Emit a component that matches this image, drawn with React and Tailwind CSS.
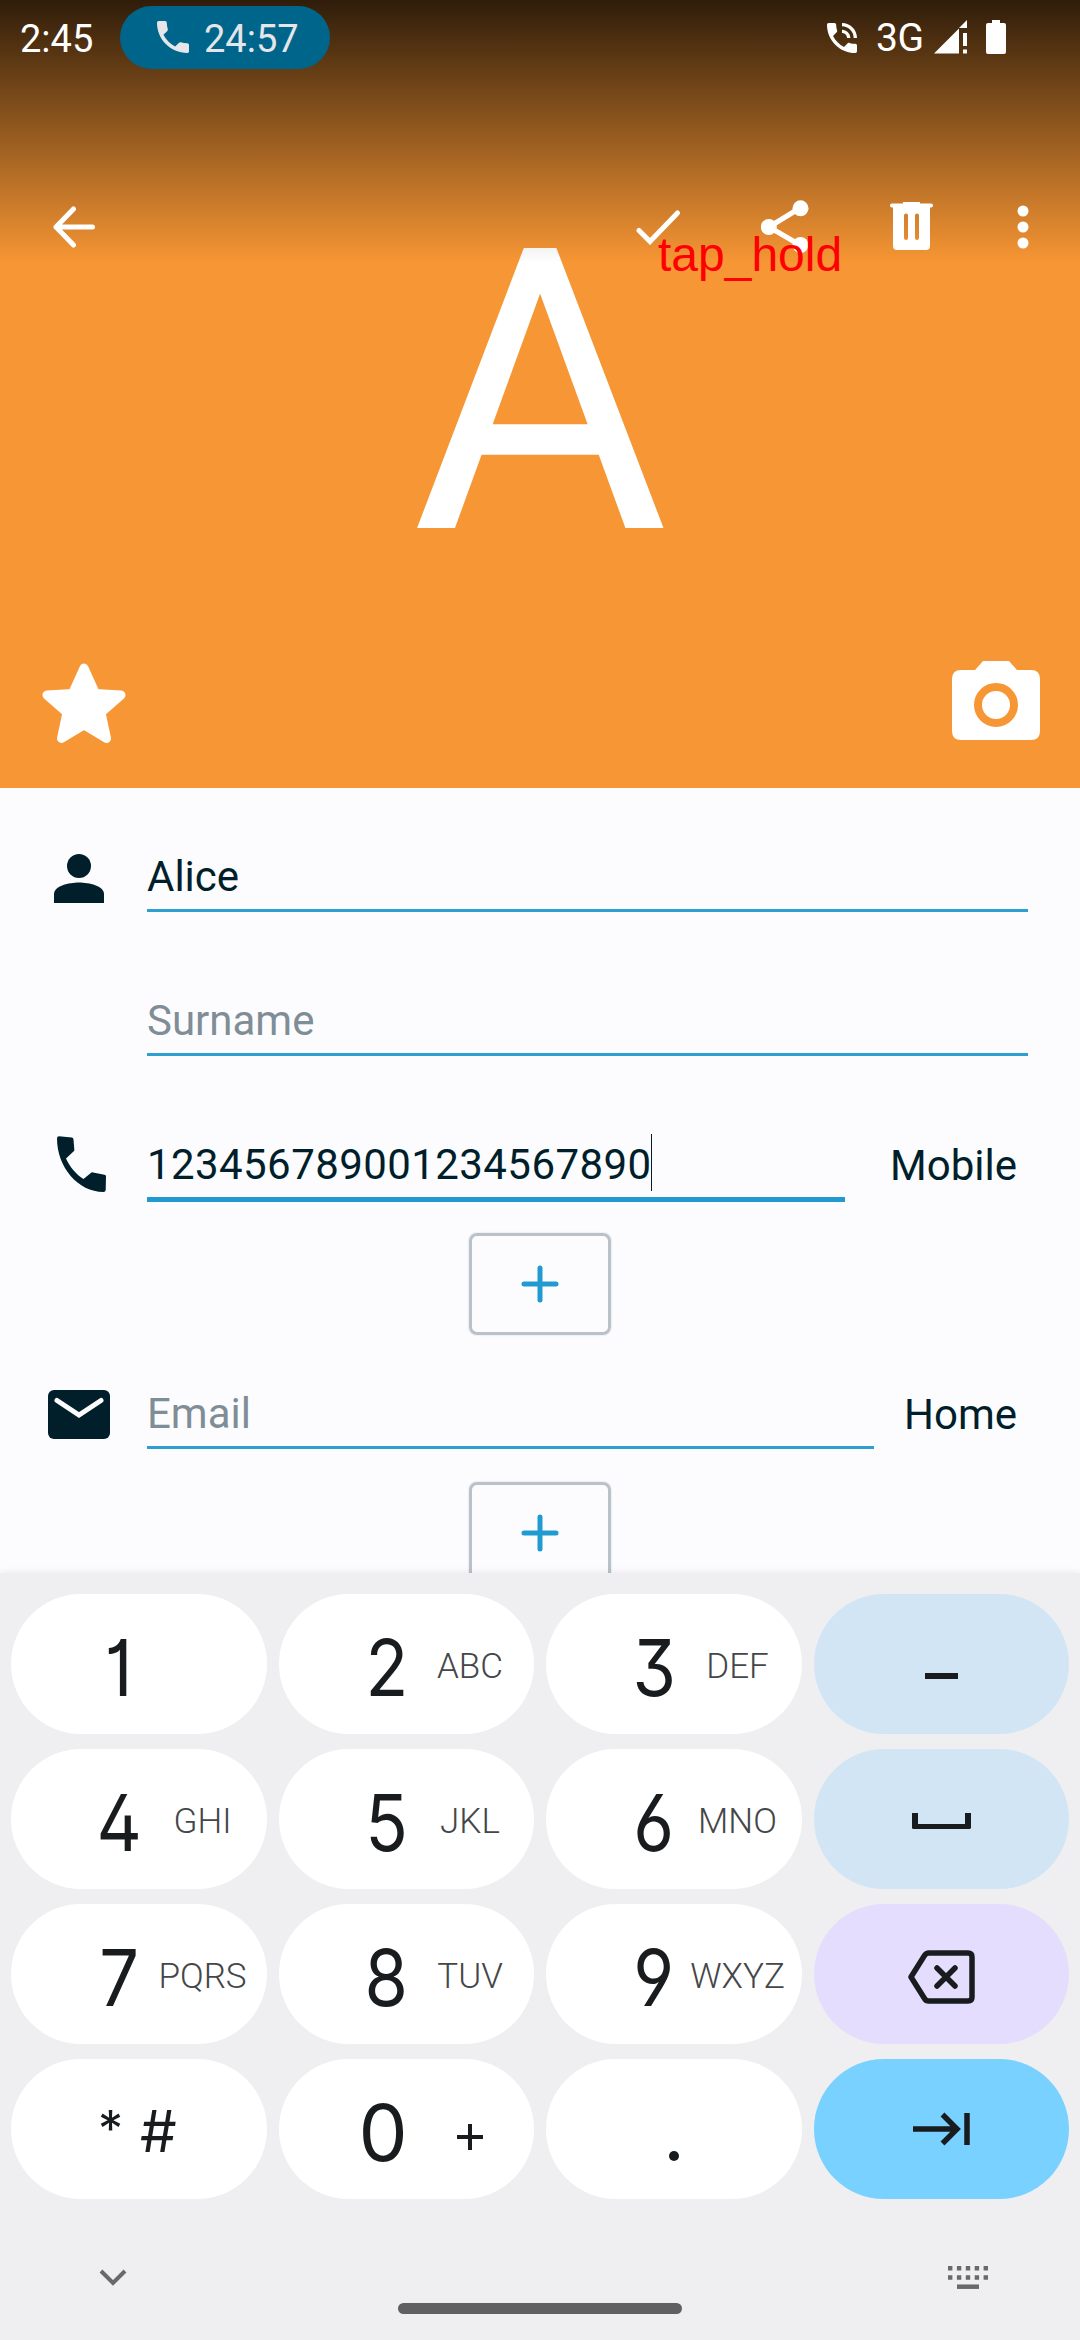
const PHONE = "M6.62 10.79c1.44 2.83 3.76 5.14 6.59 6.59l2.2-2.2c.27-.27.67-.36 1.02-.24 1.12.37 2.33.57 3.57.57.55 0 1 .45 1 1V20c0 .55-.45 1-1 1-9.39 0-17-7.61-17-17 0-.55.45-1 1-1h3.5c.55 0 1 .45 1 1 0 1.25.2 2.45.57 3.57.11.35.03.74-.25 1.02l-2.2 2.2z";

function StatusBar() {
  return (
    <div className="flex h-[78px] items-start text-[38px] leading-[78px] text-white">
      <span className="ml-5 w-[100px]">2:45</span>
      <div className="mt-[6px] flex h-[63px] w-[210px] items-start rounded-full bg-[#00658a] pl-[37px] leading-[66px] text-[#e6e6ea]">
        <svg className="mt-[15px] h-8 w-8" viewBox="3 3 18 18" fill="currentColor"><path d={PHONE} /></svg>
        <span className="ml-[15px]">24:57</span>
      </div>
      <div className="ml-auto flex pr-[74px]">
        <svg className="mt-[23px] h-[30px] w-[30px]" viewBox="3 3 18 18" fill="currentColor">
          <path d="M20 15.5c-1.25 0-2.45-.2-3.57-.57-.35-.11-.74-.03-1.02.24l-2.2 2.2c-2.83-1.44-5.15-3.75-6.59-6.59l2.2-2.21c.28-.26.36-.65.25-1C8.7 6.45 8.5 5.25 8.5 4c0-.55-.45-1-1-1H4c-.55 0-1 .45-1 1 0 9.39 7.61 17 17 17 .55 0 1-.45 1-1v-3.5c0-.55-.45-1-1-1zM19 12h2c0-4.97-4.03-9-9-9v2c3.87 0 7 3.13 7 7zm-4 0h2c0-2.76-2.24-5-5-5v2c1.66 0 3 1.34 3 3z" />
        </svg>
        <span className="ml-[19px] w-[58px] text-[39px] font-[450] leading-[76px] tracking-[-0.5px]">3G</span>
        <svg className="mt-5 h-[34px] w-[33px]" viewBox="0 0 33 34" fill="currentColor">
          <path d="M0 33.500L25 8.500V33.500ZM25 8L33 0V8ZM29 13H33V26H29ZM29 29.500H33V33.500H29Z" />
        </svg>
        <svg className="ml-[19px] mt-5 h-[34px] w-5" viewBox="0 0 20 34" fill="currentColor">
          <path d="M6 0H14V3H18Q20 3 20 5V32Q20 34 18 34H2Q0 34 0 32V5Q0 3 2 3H6Z" />
        </svg>
      </div>
    </div>
  );
}

function Toolbar() {
  return (
    <div className="mt-[77px] flex h-36 items-center pl-[53px] text-white">
      <svg className="h-[42px] w-[42px]" viewBox="0 0 42 42" fill="none" stroke="currentColor" strokeWidth="5" strokeLinecap="round" strokeLinejoin="round">
        <path d="M39.500 21H3M20.500 3L3 21L20.500 39" />
      </svg>
      <svg className="ml-[541px] h-[35px] w-[45px]" viewBox="0 0 45 35" fill="none" stroke="currentColor" strokeWidth="5" strokeLinecap="round">
        <path d="M3 20.500L14 31.500L41.500 3" />
      </svg>
      <svg className="-mt-[2px] ml-[80px] h-[53px] w-12" viewBox="0 0 48 53" fill="currentColor">
        <path d="M8 27L39 8M8 27L39 45" stroke="currentColor" strokeWidth="5" />
        <circle cx="39.500" cy="8.300" r="8" /><circle cx="7.800" cy="27" r="8" /><circle cx="39.500" cy="45" r="8" />
      </svg>
      <svg className="-mt-[2px] ml-[81px] h-12 w-[43px]" viewBox="0 0 43 48" fill="currentColor" fillRule="evenodd">
        <path d="M13 0H30V1.500H41Q43 1.500 43 3.500T41 5.500H40V44Q40 48 36 48H7Q3 48 3 44V5.500H2Q0 5.500 0 3.500T2 1.500H13ZM14 13.500V36Q14 38 16 38T18 36V13.500Q18 11.500 16 11.500T14 13.500ZM25 13.500V36Q25 38 27 38T29 36V13.500Q29 11.500 27 11.500T25 13.500Z" />
      </svg>
      <svg className="ml-[84px] h-[44px] w-3" viewBox="0 0 12 44" fill="currentColor">
        <circle cx="6" cy="6" r="5.500" /><circle cx="6" cy="22" r="5.500" /><circle cx="6" cy="38" r="5.500" />
      </svg>
    </div>
  );
}

function Field({ icon, value, muted, label, focused, caret }) {
  return (
    <div className="flex h-36 shrink-0 items-start">
      <div className="flex h-full w-[147px] shrink-0 items-start">{icon}</div>
      <div className={focused ? "flex h-[96px] grow items-start border-b-[5px] border-[#219bcf] pt-[23px] tracking-[0.42px]" : "flex h-[94px] grow items-start border-b-[3px] border-[#2f9fd1] pt-[23px]"}>
        <span className={muted ? "text-[#7f8e96]" : ""}>{value}</span>
        {caret && <span className="-ml-px mt-[5px] h-[57px] w-px bg-[#001f2a]" />}
      </div>
      {label ? <span className={focused ? "ml-[45px] mr-[63px] pt-[24px]" : "ml-[30px] mr-[63px] pt-[24px]"}>{label}</span> : <span className="w-[52px]" />}
    </div>
  );
}

function AddButton() {
  return (
    <div className="mx-auto flex h-[102px] w-[142px] shrink-0 items-center justify-center rounded-[8px] border-[3px] border-[#b9c2c8] shadow-[0_0_2px_#c8d0d4]">
      <svg className="h-[38px] w-[38px]" viewBox="0 0 38 38" stroke="#219bcf" strokeWidth="5" strokeLinecap="round"><path d="M19 3V35M3 19H35" /></svg>
    </div>
  );
}

const INK = "#191c1e";

function NumKey({ digit, letters, narrow = true }) {
  return (
    <div className="flex h-[140px] items-start rounded-full bg-white pl-[62px]">
      <span className="mt-[4px] flex w-[92px] justify-center font-[Inter] text-[78px] leading-[140px] text-[#191c1e]">
        <span className={narrow ? "inline-block scale-x-[0.9] [font-feature-settings:'ss01','cv01','cv03','cv04']" : "mr-[7px] inline-block"}>{digit}</span>
      </span>
      <span className="mt-[3px] flex w-[75px] justify-center whitespace-nowrap text-[35px] font-[350] leading-[140px] text-[#444648]">{letters}</span>
    </div>
  );
}

function Keyboard() {
  return (
    <div className="z-10 flex h-[767px] shrink-0 flex-col bg-[#efeff1] shadow-[0_-2px_6px_rgba(0,0,0,0.06)]">
      <div className="mx-[11px] mt-[21px] grid grid-cols-4 gap-x-3 gap-y-[15px]">
        <NumKey digit="1" />
        <NumKey digit="2" letters="ABC" />
        <NumKey digit="3" letters="DEF" />
        <div className="flex h-[140px] justify-center rounded-full bg-[#d2e5f4] pt-[79px]"><span className="h-[6px] w-[33px] bg-[#191c1e]" /></div>
        <NumKey digit="4" letters="GHI" />
        <NumKey digit="5" letters="JKL" />
        <NumKey digit="6" letters="MNO" />
        <div className="flex h-[140px] justify-center rounded-full bg-[#d2e5f4] pt-[64px]"><span className="h-[16px] w-[59px] rounded-b-[2px] border-x-[6px] border-b-[5px] border-[#191c1e]" /></div>
        <NumKey digit="7" letters="PQRS" />
        <NumKey digit="8" letters="TUV" />
        <NumKey digit="9" letters="WXYZ" />
        <div className="flex h-[140px] items-start justify-center rounded-full bg-[#e4ddfe] pt-[46px]">
          <svg className="h-[54px] w-[67px]" viewBox="0 0 67 54" fill="none" stroke={INK} strokeWidth="5.500" strokeLinejoin="round" strokeLinecap="round">
            <path d="M21 3H60Q64 3 64 7V47Q64 51 60 51H21Q18 51 16.500 48.500L3 27L16.500 5.500Q18 3 21 3ZM29 18L47 36M47 18L29 36" />
          </svg>
        </div>
        <div className="flex h-[140px] items-start rounded-full bg-white pl-[87px] font-[Inter] text-[58px] leading-[140px] text-[#191c1e]">
          <span className="w-[42px] text-[50px]">*</span>
          <span className="mt-[2px] origin-left">#</span>
        </div>
        <NumKey digit="0" letters={<svg className="mt-[62px] h-[26px] w-[26px]" viewBox="0 0 26 26" stroke={INK} strokeWidth="4"><path d="M13 0V26M0 13H26" /></svg>} narrow={false} />
        <div className="flex h-[140px] justify-center rounded-full bg-white pt-[92px]"><span className="h-[10px] w-[10px] rounded-full bg-[#191c1e]" /></div>
        <div className="flex h-[140px] items-start justify-center rounded-full bg-[#78d1ff] pt-[53px]">
          <svg className="h-[34px] w-[57px]" viewBox="0 0 57 34" fill="none" stroke={INK} strokeWidth="5.500">
            <path d="M0 17H45M29.500 2.500L44 17L29.500 31.500M54 1V33" />
          </svg>
        </div>
      </div>
      <div className="flex h-[104px] items-start pl-[99px] pr-[92px]">
        <svg className="mt-[70px] h-[17px] w-7" viewBox="0 0 28 17" fill="none" stroke="#696969" strokeWidth="4"><path d="M2 2L14 14L26 2" /></svg>
        <svg className="ml-auto mt-[67px] h-6 w-10" viewBox="0 0 40 24" stroke="#696969" strokeWidth="4.500" fill="none">
          <path d="M0 2.250H40M0 11.500H40" strokeDasharray="4.400 4.500" />
          <path d="M9 20.700H31" />
        </svg>
      </div>
      <div className="mx-auto h-[11px] w-[284px] rounded-full bg-[#606060]" />
    </div>
  );
}

export default function App() {
  return (
    <div className="flex h-[2340px] w-[1080px] flex-col overflow-hidden bg-[#fcfcff] font-[Roboto,sans-serif] text-[42px] leading-[72px] text-[#001f2a]">
      <header className="relative isolate flex h-[788px] shrink-0 flex-col bg-[#f79634]">
        <div className="absolute inset-0 -z-10 pt-[93px] text-center text-[394px] leading-[600px] text-white">A</div>
        <div className="absolute inset-x-0 top-0 -z-10 h-[263px] bg-linear-to-b from-black/81 to-transparent" />
        <StatusBar />
        <Toolbar />
        <div className="absolute left-[658px] top-[225px] z-10 font-['Liberation_Sans'] text-[48px] leading-[60px] text-[#ff0000]">tap_hold</div>
        <div className="mt-auto flex items-start justify-between pb-[45px] pl-[42px] pr-10 text-white">
          <svg className="mt-[3px] h-20 w-[84px]" viewBox="0 0 84 80" fill="currentColor" stroke="currentColor" strokeWidth="9" strokeLinejoin="round">
            <path d="M42 5L53.500 30.500L79 32L59 49.500L64.500 75.500L42 62L19.500 75.500L25 49.500L5 32L30.500 30.500Z" />
          </svg>
          <svg className="mt-px h-20 w-[88px]" viewBox="0 0 88 80" fill="currentColor">
            <path d="M31 0H57L65 9H79Q88 9 88 18V70Q88 79 79 79H9Q0 79 0 70V18Q0 9 9 9H23Z" />
            <circle cx="44" cy="44" r="18" fill="none" stroke="#f79634" strokeWidth="8" />
          </svg>
        </div>
      </header>
      <main className="flex min-h-0 grow flex-col overflow-hidden pt-[30px]">
        <Field value="Alice" icon={<svg className="ml-[54px] mt-[36px] h-[49px] w-[50px]" viewBox="0 0 50 49" fill="currentColor"><circle cx="25" cy="12" r="12" /><path d="M0 49V40C0 32 15 28.500 25 28.500S50 32 50 40V49Z" /></svg>} />
        <Field value="Surname" muted />
        <Field value="123456789001234567890" label="Mobile" focused caret icon={<svg className="ml-[57px] mt-[30px] h-[56px] w-[49px]" viewBox="0 0 49 56" fill="currentColor"><path d="M2 .2Q0 .2 0 2.500C0 31 21 56 46.500 56Q48.500 56 48.700 54L49 40.500Q49 39 47.500 38.700L36 36.400Q34.500 36.200 33.500 37.200L26.500 43C19.500 39 12.500 30.500 9 22.500L17 15Q17.500 14.500 17.300 13.500L16.500 3.500Q16.300 1.700 14.800 1.500Z" /></svg>} />
        <div className="-mt-[17px] mb-[20px] flex shrink-0"><AddButton /></div>
        <Field value="Email" muted label="Home" icon={<svg className="ml-12 mt-[35px] h-[49px] w-[62px]" viewBox="0 0 62 49"><rect width="62" height="49" rx="6" fill="#001f2a" /><path d="M9 10.500L31 25L53 10.500" fill="none" stroke="#fcfcff" strokeWidth="5" strokeLinecap="round" /></svg>} />
        <div className="-mt-[17px] flex shrink-0"><AddButton /></div>
      </main>
      <Keyboard />
    </div>
  );
}
